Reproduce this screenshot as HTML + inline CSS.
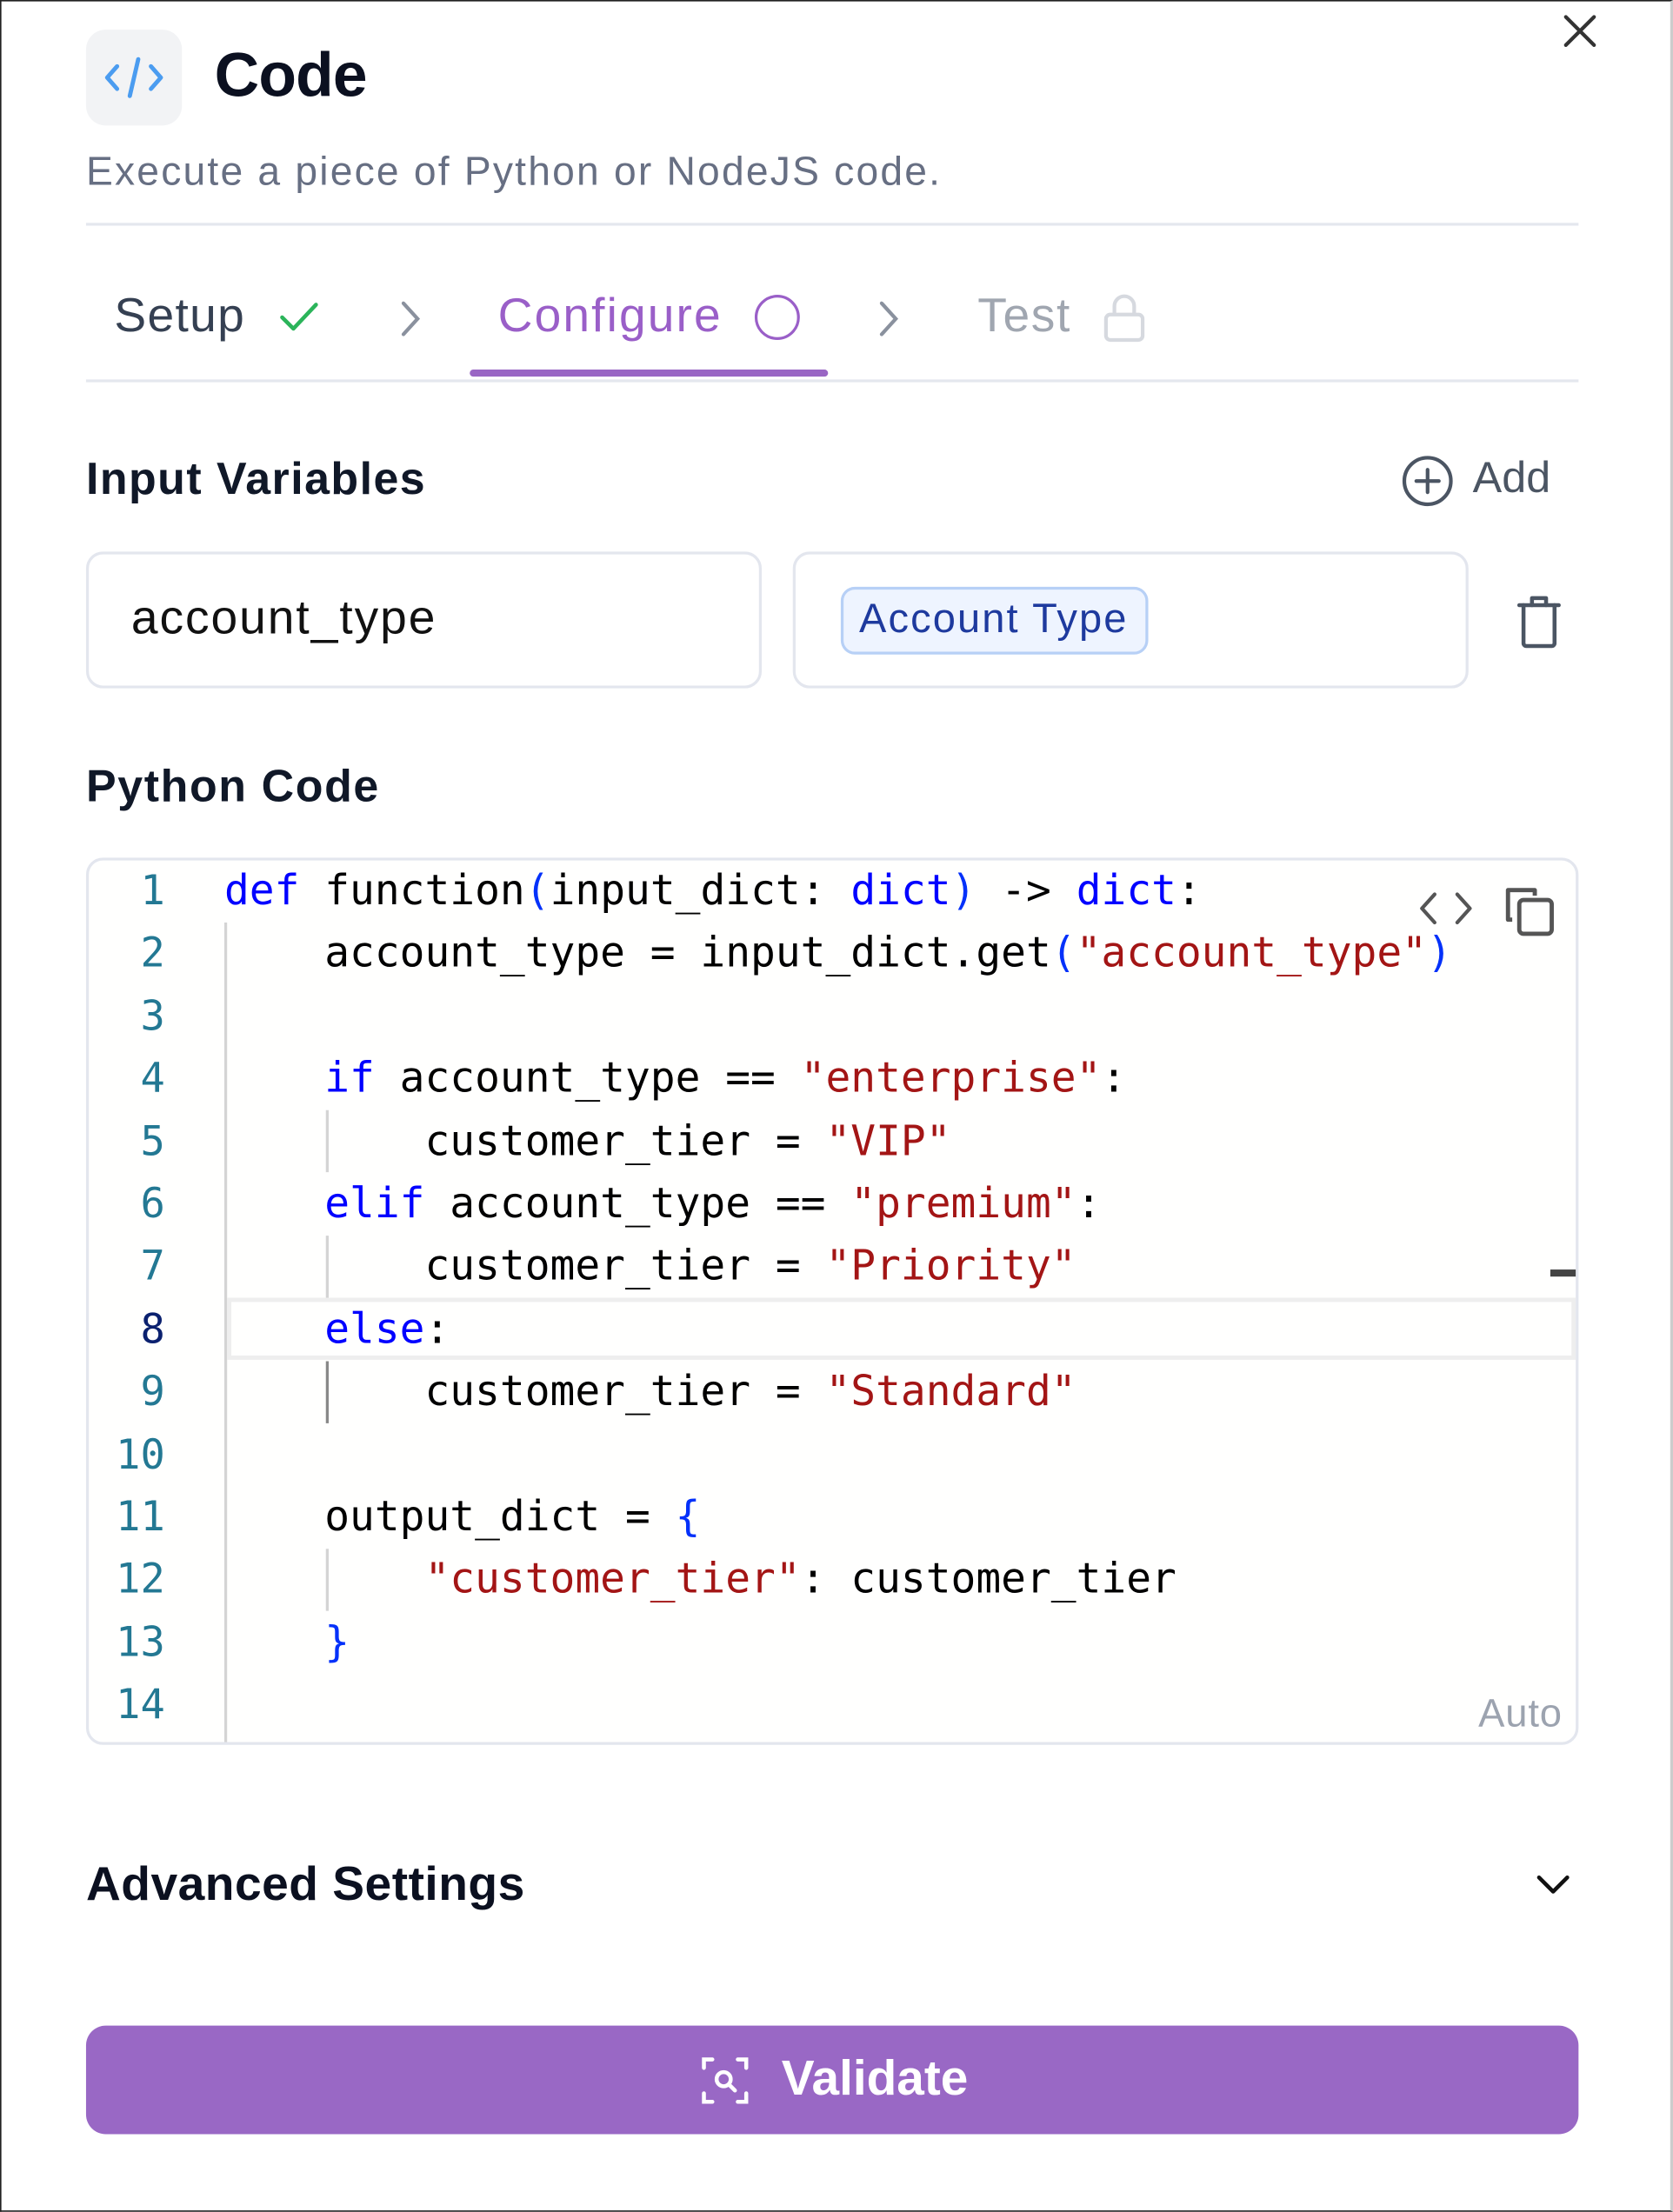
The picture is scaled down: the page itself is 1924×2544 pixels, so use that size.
<!DOCTYPE html>
<html><head><meta charset="utf-8"><style>
html,body{margin:0;padding:0;background:#fff;width:1924px;height:2544px;overflow:hidden}
#w{position:absolute;left:0;top:0;width:1186px;height:1568px;transform:scale(1.6223);transform-origin:0 0;font-family:"Liberation Sans",sans-serif;box-sizing:border-box;border:1px solid #222;border-right:2px solid #ccc;background:#fff}
.a{position:absolute;white-space:nowrap}
.ln{position:absolute;left:60px;width:56px;text-align:right;color:#237893;font-family:"DejaVu Sans Mono",monospace;font-size:29px;line-height:44.4px}
.cl{position:absolute;left:158px;font-family:"DejaVu Sans Mono",monospace;font-size:29.5px;line-height:44.4px;color:#000;white-space:pre}
.k{color:#0000ff}.s{color:#a31515}.b{color:#0431fa}
.g{position:absolute;width:2px;background:#d4d4d4}
</style></head><body><div id="w">
<div class="a" style="left:60px;top:20px;width:68px;height:68px;border-radius:14px;background:#f2f3f5"></div>
<svg class="a" style="left:72px;top:36px" width="44" height="36" viewBox="0 0 44 36" fill="none" stroke="#4b9cf0" stroke-width="3" stroke-linecap="round" stroke-linejoin="round"><path d="M10 10 L3 18 L10 26"/><path d="M34 10 L41 18 L34 26"/><path d="M25 5 L19 31"/></svg>
<div class="a" style="left:151px;top:28px;font-size:44px;font-weight:600;color:#0b1020;letter-spacing:-0.5px">Code</div>
<svg class="a" style="left:1106px;top:8px" width="26" height="26" viewBox="0 0 26 26" stroke="#333" stroke-width="2.6" stroke-linecap="round"><path d="M3 3L23 23M23 3L3 23"/></svg>
<div class="a" style="left:60px;top:105px;font-size:28.5px;color:#676f83;letter-spacing:1.35px">Execute a piece of Python or NodeJS code.</div>
<div class="a" style="left:60px;top:157px;width:1058px;height:2px;background:#e4e7ee"></div>
<div class="a" style="left:80px;top:204px;font-size:34px;color:#354052;letter-spacing:0.8px">Setup</div>
<svg class="a" style="left:196px;top:210px" width="30" height="26" viewBox="0 0 30 26" fill="none" stroke="#2bb45a" stroke-width="2.8" stroke-linecap="round" stroke-linejoin="round"><path d="M3 14L11 22L27 5"/></svg>
<svg class="a" style="left:280px;top:210px" width="20" height="30" viewBox="0 0 20 30" fill="none" stroke="#8a919e" stroke-width="2.6" stroke-linecap="round"><path d="M5 4L15 15L5 26"/></svg>
<div class="a" style="left:352px;top:204px;font-size:34px;color:#9a5fc8;letter-spacing:1.3px">Configure</div>
<div class="a" style="left:534px;top:208px;width:28px;height:28px;border:2.8px solid #9a5fc8;border-radius:50%"></div>
<svg class="a" style="left:619px;top:210px" width="20" height="30" viewBox="0 0 20 30" fill="none" stroke="#8a919e" stroke-width="2.6" stroke-linecap="round"><path d="M5 4L15 15L5 26"/></svg>
<div class="a" style="left:692px;top:204px;font-size:34px;color:#a0a6b0;letter-spacing:1px">Test</div>
<svg class="a" style="left:780px;top:206px" width="32" height="36" viewBox="0 0 32 36" fill="none" stroke="#d6d9df" stroke-width="2.6"><rect x="3" y="16" width="26" height="18" rx="3"/><path d="M9 16V10a7 7 0 0 1 14 0v6"/></svg>
<div class="a" style="left:332px;top:261px;width:254px;height:5px;border-radius:3px;background:#9966c4"></div>
<div class="a" style="left:60px;top:268px;width:1058px;height:2px;background:#e4e7ee"></div>
<div class="a" style="left:60px;top:320px;font-size:32px;font-weight:600;color:#101828;letter-spacing:0.9px">Input Variables</div>
<svg class="a" style="left:992px;top:321px" width="38" height="38" viewBox="0 0 38 38" fill="none" stroke="#4b5563" stroke-width="2.6" stroke-linecap="round"><circle cx="19" cy="19" r="16.5"/><path d="M19 11V27M11 19H27"/></svg>
<div class="a" style="left:1043px;top:320px;font-size:31px;color:#4b5563">Add</div>
<div class="a" style="left:60px;top:390px;width:479px;height:97px;box-sizing:border-box;border:2px solid #e3e6ee;border-radius:12px"></div>
<div class="a" style="left:92px;top:418px;font-size:34px;color:#111;letter-spacing:1.2px">account_type</div>
<div class="a" style="left:561px;top:390px;width:479px;height:97px;box-sizing:border-box;border:2px solid #e3e6ee;border-radius:12px"></div>
<div class="a" style="left:595px;top:415px;width:218px;height:48px;box-sizing:border-box;background:#eef4ff;border:2px solid #b7d0f6;border-radius:10px"></div>
<div class="a" style="left:608px;top:422px;font-size:29px;color:#1e3a9e;letter-spacing:1.3px">Account Type</div>
<svg class="a" style="left:1072px;top:420px" width="36" height="40" viewBox="0 0 36 40" fill="none" stroke="#4b5563" stroke-width="2.8" stroke-linejoin="round" stroke-linecap="round"><path d="M4 8H32"/><path d="M13 8V3H23V8"/><path d="M7 8V35a2 2 0 0 0 2 2H27a2 2 0 0 0 2-2V8"/></svg>
<div class="a" style="left:60px;top:538px;font-size:32px;font-weight:600;color:#101828;letter-spacing:1px">Python Code</div>
<div class="a" style="left:60px;top:607px;width:1058px;height:629px;box-sizing:border-box;border:2px solid #e3e6ee;border-radius:12px;background:#fffffe"></div>
<div class="a" style="left:158px;top:653px;width:2px;height:581px;background:#d4d4d4"></div>
<div class="a" style="left:160px;top:919px;width:956px;height:44px;box-sizing:border-box;border:3px solid #eeeeee"></div>
<div class="g" style="left:230px;top:786px;height:44px"></div>
<div class="g" style="left:230px;top:875px;height:44px"></div>
<div class="g" style="left:230px;top:964px;height:44px;background:#888"></div>
<div class="g" style="left:230px;top:1097px;height:44px"></div>
<div class="ln" style="top:608px">1</div>
<div class="ln" style="top:652px">2</div>
<div class="ln" style="top:697px">3</div>
<div class="ln" style="top:741px">4</div>
<div class="ln" style="top:786px">5</div>
<div class="ln" style="top:830px">6</div>
<div class="ln" style="top:874px">7</div>
<div class="ln" style="top:919px;color:#0b216f">8</div>
<div class="ln" style="top:963px">9</div>
<div class="ln" style="top:1008px">10</div>
<div class="ln" style="top:1052px">11</div>
<div class="ln" style="top:1096px">12</div>
<div class="ln" style="top:1141px">13</div>
<div class="ln" style="top:1185px">14</div>
<div class="cl" style="top:608px"><span class="k">def</span> function<span class="b">(</span>input_dict: <span class="k">dict</span><span class="b">)</span> -&gt; <span class="k">dict</span>:</div>
<div class="cl" style="top:652px">    account_type = input_dict.get<span class="b">(</span><span class="s">"account_type"</span><span class="b">)</span></div>
<div class="cl" style="top:741px">    <span class="k">if</span> account_type == <span class="s">"enterprise"</span>:</div>
<div class="cl" style="top:786px">        customer_tier = <span class="s">"VIP"</span></div>
<div class="cl" style="top:830px">    <span class="k">elif</span> account_type == <span class="s">"premium"</span>:</div>
<div class="cl" style="top:874px">        customer_tier = <span class="s">"Priority"</span></div>
<div class="cl" style="top:919px">    <span class="k">else</span>:</div>
<div class="cl" style="top:963px">        customer_tier = <span class="s">"Standard"</span></div>
<div class="cl" style="top:1052px">    output_dict = <span class="b">{</span></div>
<div class="cl" style="top:1096px">        <span class="s">"customer_tier"</span>: customer_tier</div>
<div class="cl" style="top:1141px">    <span class="b">}</span></div>
<svg class="a" style="left:1004px;top:628px" width="40" height="30" viewBox="0 0 40 30" fill="none" stroke="#555" stroke-width="2.6" stroke-linecap="round" stroke-linejoin="round"><path d="M12 5L3 15L12 25M28 5L37 15L28 25"/></svg>
<svg class="a" style="left:1063px;top:625px" width="40" height="40" viewBox="0 0 40 40" fill="none" stroke="#555" stroke-width="3" stroke-linejoin="round"><path d="M8 26H5V5H24V9"/><rect x="13" y="12" width="23" height="24" rx="3"/></svg>
<div class="a" style="left:1098px;top:899px;width:18px;height:5px;background:#444"></div>
<div class="a" style="left:1047px;top:1198px;font-size:28px;color:#9ca3af;letter-spacing:0.5px">Auto</div>
<div class="a" style="left:60px;top:1316px;font-size:34px;font-weight:600;color:#0b1020;letter-spacing:0.3px">Advanced Settings</div>
<svg class="a" style="left:1087px;top:1325px" width="26" height="20" viewBox="0 0 26 20" fill="none" stroke="#111" stroke-width="2.8" stroke-linecap="round" stroke-linejoin="round"><path d="M3 5L13 15L23 5"/></svg>
<div class="a" style="left:60px;top:1435px;width:1058px;height:77px;border-radius:14px;background:#9968c5"></div>
<svg class="a" style="left:494px;top:1454px" width="38" height="40" viewBox="0 0 38 40" fill="none" stroke="#fff" stroke-width="2.8" stroke-linecap="round"><path d="M4 11V5H10M28 5H34V11M34 29V35H28M10 35H4V29"/><circle cx="18" cy="19" r="5"/><path d="M22 23L26 27"/></svg>
<div class="a" style="left:553px;top:1453px;font-size:35px;font-weight:600;color:#fff">Validate</div>
</div></body></html>
